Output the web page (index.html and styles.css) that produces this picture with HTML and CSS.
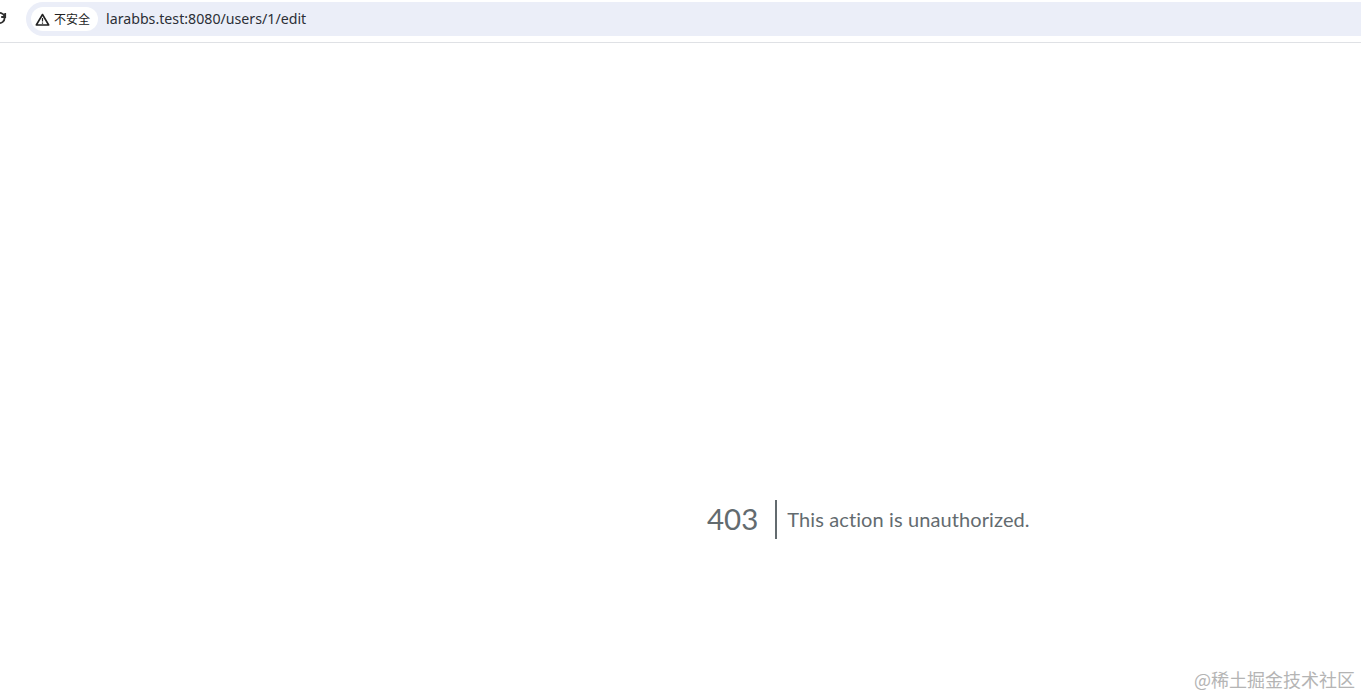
FILE: index.html
```html
<!DOCTYPE html>
<html lang="zh-CN">
<head>
  <meta charset="UTF-8">
  <meta name="viewport" content="width=device-width, initial-scale=1.0">
  <title>Forbidden</title>
  <link rel="stylesheet" href="styles.css">
</head>
<body>
  <header class="toolbar">
    <svg class="reload" width="7" height="14" viewBox="0 0 7 14">
      <path d="M-2 11.8 A5 5 0 0 0 4.6 7 M5.2 2 V6 H1.2 M-3 2.6 A5.5 5.5 0 0 1 4.4 4.8" fill="none" stroke="#2e2e2e" stroke-width="1.8"/>
    </svg>
    <div class="address-bar">
      <div class="security-chip">
        <svg width="15" height="13" viewBox="0 0 15 13">
          <path d="M7.5 1.5 L13.7 12 H1.3 Z" fill="none" stroke="#222" stroke-width="1.6" stroke-linejoin="round"/>
          <path d="M7.5 5 V8.6 M7.5 9.5 V10.8" stroke="#222" stroke-width="1.2"/>
        </svg>
        <span>不安全</span>
      </div>
      <span class="url">larabbs.test:8080/users/1/edit</span>
    </div>
  </header>

  <main class="error-page">
    <div class="error-box">
      <div class="error-code">403</div>
      <div class="error-message">This action is unauthorized.</div>
    </div>
  </main>

  <div class="watermark">@稀土掘金技术社区</div>
</body>
</html>
```

FILE: styles.css
```css
html, body {
  margin: 0;
  height: 100%;
  overflow: hidden;
  background-color: #fff;
}

body {
  position: relative;
  font-family: "Noto Sans", "Noto Sans CJK SC", sans-serif;
}

.toolbar {
  display: flex;
  align-items: flex-start;
  height: 42px;
  border-bottom: 1px solid #dfe1e5;
  box-sizing: content-box;
}

.reload {
  flex: none;
  margin-top: 11px;
  margin-right: 19px;
}

.address-bar {
  flex: 1;
  display: flex;
  align-items: center;
  height: 34px;
  margin-top: 2px;
  padding-left: 5px;
  background-color: #ebeef8;
  border-radius: 17px 0 0 17px;
}

.security-chip {
  display: flex;
  align-items: center;
  gap: 4px;
  height: 24px;
  padding: 0 8px 0 4px;
  background-color: #fff;
  border-radius: 12px;
  font-size: 12px;
  color: #222;
}

.url {
  margin-left: 8px;
  margin-top: -2px;
  font-size: 14.2px;
  color: #2c2f36;
}

.error-page {
  padding: 457px 0 0 707px;
}

.error-box {
  display: flex;
  align-items: center;
  height: 39px;
  color: #636b6f;
}

.error-code {
  height: 39px;
  line-height: 38px;
  padding-right: 17px;
  border-right: 2px solid #636b6f;
  font-family: "Lato", sans-serif;
  font-size: 29.5px;
}

.error-message {
  padding-left: 10px;
  padding-bottom: 2px;
  font-family: "Lato", sans-serif;
  font-size: 20px;
  letter-spacing: 0.1px;
}

.watermark {
  position: absolute;
  right: 6px;
  bottom: 5px;
  font-size: 18px;
  color: #b4b4b4;
  font-family: "Noto Sans CJK SC", sans-serif;
}
```
